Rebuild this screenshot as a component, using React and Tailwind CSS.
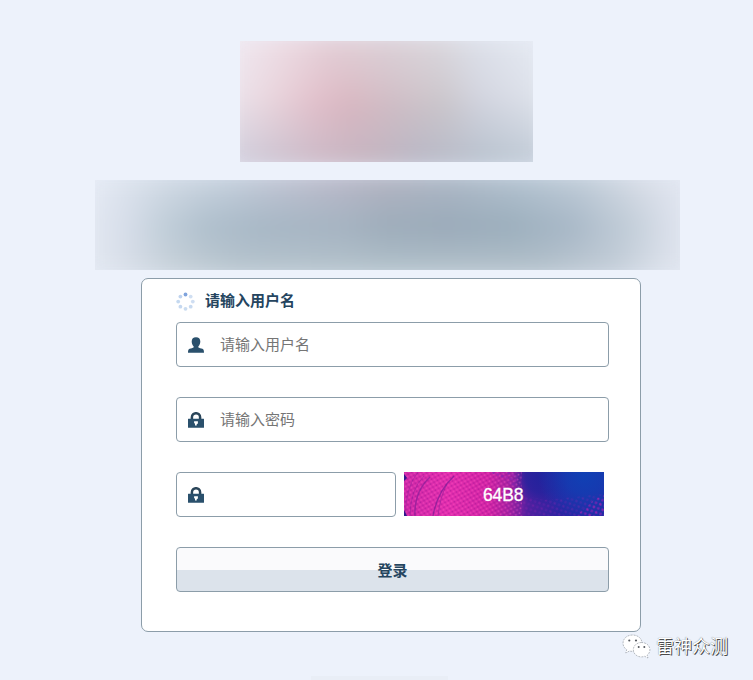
import React from "react";

const font =
  "[font-family:'Liberation_Sans','Noto_Sans_CJK_SC',sans-serif]";

function LogoPanel() {
  return (
    <div className="ml-[240px] h-[121px] w-[293px] overflow-hidden">
      <div className="-mx-3 grid h-full blur-[9px] [transform:scaleY(1.12)]">
        <div className="[grid-area:1/1] bg-[linear-gradient(90deg,#ece4ec_0%,#e9d4dc_14%,#e2bfca_28%,#dab7c1_38%,#d0bdc5_52%,#cbc6cb_68%,#d2d4df_80%,#dfe4ec_100%)]" />
        <div className="[grid-area:1/1] bg-[linear-gradient(90deg,#f0eaf2_0%,#ebd9e1_20%,#e3cfd7_32%,#dcd0d7_50%,#dad6dc_66%,#dcdfe8_78%,#e6ebf4_100%)] [mask-image:linear-gradient(#000_5%,transparent_55%)]" />
        <div className="[grid-area:1/1] bg-[linear-gradient(90deg,#d1d0de_0%,#cdc5d3_12%,#cbb9c6_30%,#c3b4c0_45%,#b8b7c5_60%,#b8c2ce_82%,#c2ccd8_100%)] [mask-image:linear-gradient(transparent_48%,#000_95%)]" />
      </div>
    </div>
  );
}

function TitlePanel() {
  return (
    <div className="ml-[95px] mt-[18px] h-[90px] w-[585px] overflow-hidden">
      <div className="-mx-3 grid h-full blur-[9px] [transform:scaleY(1.2)]">
        <div className="[grid-area:1/1] bg-[linear-gradient(90deg,#e5eaf3_0%,#d7deea_7%,#c2cfda_13%,#b0c0cd_20%,#a8b8c6_29%,#a6b4c2_42%,#9eadbb_50%,#9babba_60%,#9cafbd_70%,#a8b8c7_80%,#c3ced9_90%,#dce1ec_97%,#e0e6f0_100%)]" />
        <div className="[grid-area:1/1] bg-[linear-gradient(90deg,#e7ecf6_0%,#d0d9e4_14%,#c4cfdc_24%,#c0c4d3_32%,#b9b8c8_42%,#b2b3c1_50%,#acb7c5_60%,#b3c2d0_72%,#c0ccd8_82%,#d8dde7_92%,#e3e8f3_100%)] [mask-image:linear-gradient(#000_8%,transparent_50%)]" />
        <div className="[grid-area:1/1] bg-[linear-gradient(90deg,#e4eaf3_0%,#d8dee8_7%,#c6d0d8_15%,#b8c5ce_25%,#b3c2cb_50%,#b4c1cb_75%,#c2ccd7_87%,#d9dfe9_95%,#e1e6f0_100%)] [mask-image:linear-gradient(transparent_55%,#000_92%)]" />
      </div>
    </div>
  );
}

function Spinner() {
  const dots = [
    [9.5, 2.5, "#7fa3dc"],
    [14.7, 4.6, "#d0dff2"],
    [16.8, 9.6, "#cfdef2"],
    [14.7, 14.7, "#c8daf0"],
    [9.5, 16.8, "#cadcf0"],
    [4.4, 14.7, "#c5d8f0"],
    [2.2, 9.6, "#c5d9f0"],
    [4.4, 4.6, "#bfd3ee"],
  ];
  return (
    <svg width="19" height="19" viewBox="0 0 19 19" className="shrink-0">
      {dots.map(([x, y, c], i) => (
        <circle key={i} cx={x} cy={y} r="1.9" fill={c} />
      ))}
    </svg>
  );
}

function UserIcon() {
  return (
    <svg width="16" height="16" viewBox="0 0 16 16" className="shrink-0">
      <path
        d="M8 .2C5.200 .2 3.700 1.800 3.700 4.400C3.700 6.500 4.500 8.300 5.600 9.200V10.400C5 10.900 3 11.200 1.600 11.700C.4 12.200 0 13.200 0 15.800H16C16 13.200 15.600 12.200 14.400 11.700C13 11.200 11 10.900 10.400 10.400V9.200C11.500 8.300 12.300 6.500 12.300 4.400C12.300 1.800 10.800 .2 8 .2Z"
        fill="#2a506c"
      />
    </svg>
  );
}

function LockIcon() {
  return (
    <svg width="16" height="16" viewBox="0 0 16 16" className="shrink-0">
      <path d="M3.900 8V5.200C3.900 -.1 12.100 -.1 12.100 5.200V8" fill="none" stroke="#2a4559" strokeWidth="2.500" />
      <rect y="6.700" width="16" height="9.100" rx=".4" fill="#2a506c" />
      <path d="M6.100 9.200H9.900V11.500L8.700 12.300V13.500H7V11.600L6.100 11.200Z" fill="#fff" />
    </svg>
  );
}

function Field({ icon, placeholder, className }) {
  return (
    <div
      className={`flex h-[45px] items-center rounded-[4px] border border-[#8c9da9] bg-white pl-[11px] ${className}`}
    >
      {icon}
      <span className="ml-4 text-[15px] leading-5 text-[#757575]">{placeholder}</span>
    </div>
  );
}

function Captcha() {
  return (
    <svg width="200" height="44" viewBox="0 0 200 44" className="ml-2 shrink-0">
      <defs>
        <linearGradient id="base" x1="0" y1="0" x2="1" y2="0">
          <stop offset="0" stopColor="#cf27a8" />
          <stop offset=".22" stopColor="#e32cae" />
          <stop offset=".42" stopColor="#d222a5" />
          <stop offset=".52" stopColor="#a820a2" />
          <stop offset=".62" stopColor="#50209f" />
          <stop offset=".78" stopColor="#2b24a2" />
          <stop offset="1" stopColor="#242ba6" />
        </linearGradient>
        <radialGradient id="glow" cx="180" cy="3" r="46" gradientUnits="userSpaceOnUse">
          <stop offset="0" stopColor="#1040b4" />
          <stop offset=".4" stopColor="#1040b4" stopOpacity=".75" />
          <stop offset="1" stopColor="#1040b4" stopOpacity="0" />
        </radialGradient>
        <radialGradient id="dusk" cx="138" cy="4" r="30" gradientUnits="userSpaceOnUse">
          <stop offset="0" stopColor="#23229c" />
          <stop offset=".55" stopColor="#23229c" stopOpacity=".75" />
          <stop offset="1" stopColor="#23229c" stopOpacity="0" />
        </radialGradient>
        <pattern id="weave" width="6" height="5" patternUnits="userSpaceOnUse" patternTransform="rotate(12)">
          <circle cx="1.500" cy="1.200" r="1" fill="#ff5bc4" opacity=".45" />
          <circle cx="4.500" cy="3.700" r="1" fill="#ff5bc4" opacity=".45" />
          <circle cx="4.500" cy="1.200" r=".9" fill="#8c148c" opacity=".4" />
          <circle cx="1.500" cy="3.700" r=".9" fill="#8c148c" opacity=".4" />
        </pattern>
        <pattern id="specks" width="7" height="6" patternUnits="userSpaceOnUse" patternTransform="rotate(-22)">
          <circle cx="2" cy="1.500" r="1.200" fill="#a323b4" />
          <circle cx="5.500" cy="4.500" r="1.200" fill="#8422b4" />
        </pattern>
      </defs>
      <rect width="200" height="44" fill="url(#base)" />
      <rect width="200" height="44" fill="url(#dusk)" />
      <rect width="200" height="44" fill="url(#glow)" />
      <rect width="118" height="44" fill="url(#weave)" />
      <path d="M104 20L140 28L200 22V44H96Z" fill="url(#specks)" opacity=".28" />
      <path d="M172 44L190 28L200 23V44Z" fill="url(#specks)" opacity=".75" />
      <path d="M86 0H114L112 15Z" fill="url(#specks)" opacity=".9" />
      <g fill="none" stroke="#821d98">
        <path d="M26 5Q10 20 11 44" strokeWidth="1.500" opacity=".65" />
        <path d="M20 4Q6 18 6 44" opacity=".45" />
        <path d="M50 4Q33 20 29 44" strokeWidth="1.400" opacity=".75" />
        <path d="M43 12Q36 25 34 44" opacity=".5" />
        <path d="M14 0Q2 14 1 44" opacity=".4" />
      </g>
      <path d="M0 2L3 6L0 9ZM0 38L3 44H0Z" fill="#30188d" />
      <text x="79" y="29" fill="#fff" stroke="#fff" strokeWidth=".3" fontFamily="Liberation Sans, Arial, sans-serif" fontSize="17.500" textLength="40.500">
        64B8
      </text>
    </svg>
  );
}

function WechatLogo() {
  return (
    <svg width="29" height="25" viewBox="0 0 29 25" className="shrink-0">
      <g stroke="#8a9098" strokeWidth=".6" strokeDasharray="2 1">
        <path d="M10.500 1C5 1 1 4.600 1 9.200C1 12 2.500 14.200 4.700 15.700L3.800 19L7.500 17C8.500 17.300 9.500 17.400 10.500 17.400C16 17.400 20 13.800 20 9.200C20 4.600 16 1 10.500 1Z" fill="#fff" />
        <path d="M19.500 8.500C14.800 8.500 11.300 11.700 11.300 15.700C11.300 19.700 14.800 22.900 19.500 22.900C20.600 22.900 21.700 22.700 22.700 22.300L26 24L25.200 21.200C26.900 19.900 27.900 18 27.900 15.700C27.900 11.700 24.300 8.500 19.500 8.500Z" fill="#fff" />
      </g>
      <g fill="#55595f">
        <circle cx="7.300" cy="6.500" r="1.100" />
        <circle cx="14" cy="6.500" r="1.100" />
        <circle cx="16.700" cy="13" r="1" />
        <circle cx="22.300" cy="13" r="1" />
      </g>
    </svg>
  );
}

export default function App() {
  return (
    <div className={`relative flex h-[680px] w-[753px] flex-col overflow-hidden bg-[#edf2fb] pt-[41px] ${font}`}>
      <LogoPanel />
      <TitlePanel />
      <main className="ml-[141px] mt-2 flex h-[354px] w-[500px] flex-col rounded-[7px] border border-[#8c9da9] bg-white px-[34px] pt-3">
        <div className="flex h-5 items-center text-[15px] leading-5 font-bold text-[#25455f]">
          <Spinner />
          <span className="ml-[10px]">请输入用户名</span>
        </div>
        <Field className="mt-[11px] w-[433px]" icon={<UserIcon />} placeholder="请输入用户名" />
        <Field className="mt-[30px] w-[433px]" icon={<LockIcon />} placeholder="请输入密码" />
        <div className="mt-[30px] flex">
          <Field className="w-[220px]" icon={<LockIcon />} placeholder="" />
          <Captcha />
        </div>
        <button className="mt-[30px] h-[45px] w-[433px] rounded-[4px] border border-[#8c9da9] bg-[linear-gradient(#fafafc_0_22px,#dce3eb_22px)] pt-[3px] text-[15px] font-bold text-[#25455f]">
          登录
        </button>
      </main>
      <div className="mt-auto ml-[311px] h-[4px] w-[137px] bg-[#e9eef6]" />
      <div className="absolute left-[622px] top-[634px] flex items-center">
        <WechatLogo />
        <span className="ml-[5px] text-[18px] leading-6 text-white [text-shadow:1px_1px_0_#4b4b4b,0_0_1px_#666]">
          雷神众测
        </span>
      </div>
    </div>
  );
}
